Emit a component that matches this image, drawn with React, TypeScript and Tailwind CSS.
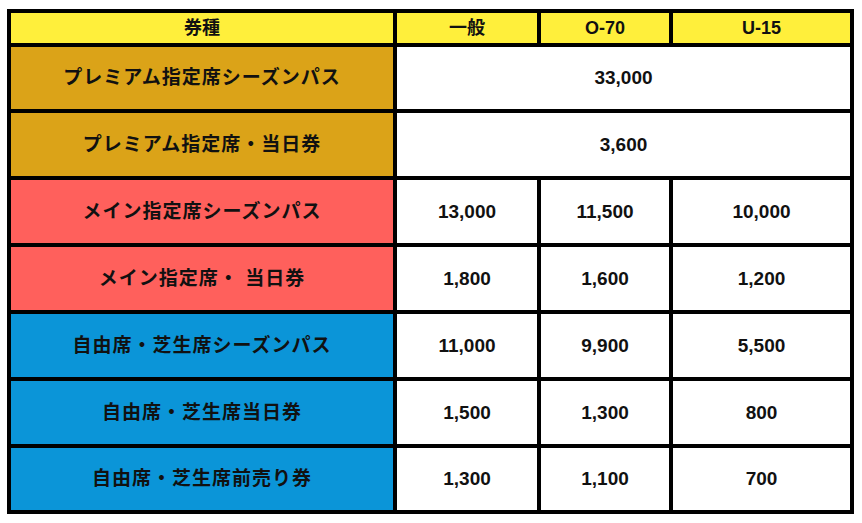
import { Fragment } from 'react';

const rows: { name: string; color: string; prices: string[] }[] = [
  { name: 'プレミアム指定席シーズンパス', color: 'bg-[#dba318]', prices: ['33,000'] },
  { name: 'プレミアム指定席・当日券', color: 'bg-[#dba318]', prices: ['3,600'] },
  { name: 'メイン指定席シーズンパス', color: 'bg-[#ff605c]', prices: ['13,000', '11,500', '10,000'] },
  { name: 'メイン指定席・ 当日券', color: 'bg-[#ff605c]', prices: ['1,800', '1,600', '1,200'] },
  { name: '自由席・芝生席シーズンパス', color: 'bg-[#0b95d8]', prices: ['11,000', '9,900', '5,500'] },
  { name: '自由席・芝生席当日券', color: 'bg-[#0b95d8]', prices: ['1,500', '1,300', '800'] },
  { name: '自由席・芝生席前売り券', color: 'bg-[#0b95d8]', prices: ['1,300', '1,100', '700'] },
];

const jp = "font-['Liberation_Sans','Noto_Sans_CJK_JP',sans-serif]";

export default function App() {
  return (
    <div className="min-h-screen bg-white pl-[7px] pt-[9px]">
      <div
        className={`grid w-[847px] grid-cols-[382px_140px_128px_177px] grid-rows-[30px_62px_63px_63px_63px_63px_63px_62px] gap-[4px] bg-black p-[4px] font-bold text-[#111] ${jp}`}
      >
        <div className="flex items-center justify-center bg-[#ffef3b] text-[18px]">券種</div>
        <div className="flex items-center justify-center bg-[#ffef3b] text-[18px]">一般</div>
        <div className="flex items-center justify-center bg-[#ffef3b] text-[18px]">O-70</div>
        <div className="flex items-center justify-center bg-[#ffef3b] text-[18px]">U-15</div>

        {rows.map((r) => (
          <Fragment key={r.name}>
            <div className={`flex items-center justify-center pt-px ${r.color} text-[19px] tracking-[1px]`}>
              {r.name}
            </div>
            {r.prices.length === 1 ? (
              <div className="col-span-3 flex items-center justify-center bg-white pt-px text-[19px]">
                {r.prices[0]}
              </div>
            ) : (
              r.prices.map((p, i) => (
                <div key={i} className="flex items-center justify-center bg-white pt-px text-[19px]">
                  {p}
                </div>
              ))
            )}
          </Fragment>
        ))}
      </div>
    </div>
  );
}
